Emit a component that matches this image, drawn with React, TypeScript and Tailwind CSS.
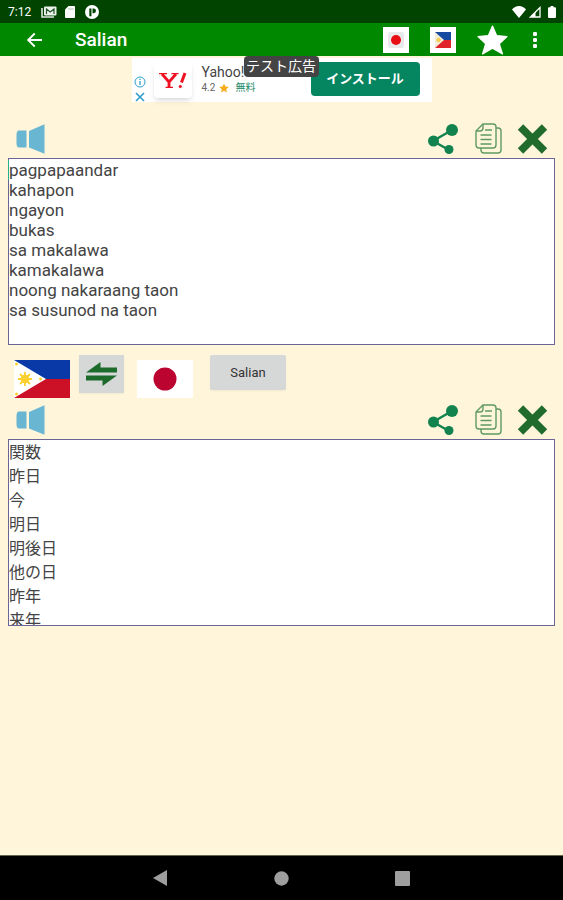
import React, { useState } from 'react'

const sourceWords = [
    'pagpapaandar',
    'kahapon',
    'ngayon',
    'bukas',
    'sa makalawa',
    'kamakalawa',
    'noong nakaraang taon',
    'sa susunod na taon',
].join('\n')

const translatedWords = [
    '関数',
    '昨日',
    '今',
    '明日',
    '明後日',
    '他の日',
    '昨年',
    '来年',
].join('\n')

const StatusBar = () => (
    <div className="flex h-[23px] items-center justify-between bg-[#004400] pl-2 pr-[7px] text-white">
        <div className="flex items-center gap-2">
            <span className="text-xs">7:12</span>
            <svg width="16" height="12" viewBox="0 0 16 12" fill="none" className="ml-0.5">
                <path d="M1 2v9h12" stroke="#dfe8df" strokeWidth="1.6" />
                <rect x="3" y="0.5" width="12.5" height="9" rx="1" fill="#eef3ee" />
                <path d="M5.500 8V3l3.700 3L13 3v5" stroke="#24562a" strokeWidth="1.2" />
            </svg>
            <svg width="10" height="12" viewBox="0 0 10 12">
                <path d="M3.500 0H9a1 1 0 0 1 1 1v10a1 1 0 0 1-1 1H1a1 1 0 0 1-1-1V3.500z" fill="#fff" />
                <path d="M4 2v2M6 2v2M8 2v2" stroke="#9db59d" strokeWidth="0.8" />
            </svg>
            <svg width="14" height="14" viewBox="0 0 13 13" className="ml-0.5">
                <circle cx="6.500" cy="6.500" r="6.500" fill="#fff" />
                <path d="M4 3.200h2v7.300H4zM7 3.200h1a2.200 2.200 0 0 1 0 4.400H7z" fill="#004400" />
            </svg>
        </div>
        <div className="flex items-center gap-[3px]">
            <svg width="14" height="12" viewBox="0 0 14 12">
                <path d="M7 12 0 3.500Q2.800 0 7 0t7 3.500z" fill="#fff" />
            </svg>
            <svg width="12" height="12" viewBox="0 0 12 12">
                <path d="M11 1.500V11H1.500z" fill="none" stroke="#fff" strokeWidth="1.300" />
                <path d="M6.500 6v5H1.500z" fill="#fff" />
            </svg>
            <svg width="8" height="12" viewBox="0 0 8 12" className="ml-1">
                <path d="M2.500 0h3v1.200H7a1 1 0 0 1 1 1V11a1 1 0 0 1-1 1H1a1 1 0 0 1-1-1V2.200a1 1 0 0 1 1-1h1.500z" fill="#fff" />
            </svg>
        </div>
    </div>
)

const AppBar = () => (
    <header className="flex h-[33px] items-center bg-[#008800] pr-[25px] text-white">
        <button aria-label="Back" className="ml-[26px] mr-8">
            <svg width="17" height="16" viewBox="0 0 17 16" fill="none" stroke="#fff" strokeWidth="1.900">
                <path d="M16 8H2M8.700 1.500 2.200 8l6.500 6.500" />
            </svg>
        </button>
        <h1 className="flex-1 pt-0.5 text-[19px] font-medium">Salian</h1>
        <button aria-label="Japanese" className="mr-[21px]">
            <svg width="26" height="26" viewBox="0 0 26 26">
                <rect width="26" height="26" fill="#fff" />
                <rect x="5" y="5" width="16" height="16" rx="2" fill="#e9e9ec" />
                <circle cx="13" cy="13" r="5" fill="#e80d12" />
            </svg>
        </button>
        <button aria-label="Filipino" className="mr-[21px]">
            <svg width="26" height="26" viewBox="0 0 26 26">
                <rect width="26" height="26" fill="#fff" />
                <path d="M5 5h16v8H5z" fill="#174aa0" />
                <path d="M5 13h16v8H5z" fill="#e1222b" />
                <path d="M5 5 14 13l-9 8z" fill="#f3ecd9" />
                <circle cx="8.500" cy="13" r="2.200" fill="#f6cf52" />
            </svg>
        </button>
        <button aria-label="Favorite" className="mr-6">
            <svg width="31" height="30" viewBox="0 0 31 30">
                <path d="M15.500 1 19.600 10.600 30 11.500l-7.700 7.200L25.500 29 15.500 23.200 5.500 29l3.200-10.300L1 11.500l10.400-.9z" fill="#fff" stroke="#fff" strokeWidth="1.200" strokeLinejoin="round" />
            </svg>
        </button>
        <button aria-label="More options">
            <svg width="6" height="18" viewBox="0 0 6 18" fill="#fff">
                <rect x="1" y="1" width="4" height="4" rx="1.200" />
                <rect x="1" y="7" width="4" height="4" rx="1.200" />
                <rect x="1" y="13" width="4" height="4" rx="1.200" />
            </svg>
        </button>
    </header>
)

const AdBanner = () => (
    <div className="relative mx-auto mt-0.5 flex h-11 w-[300px] bg-white">
        <div className="flex flex-col items-center gap-1 pl-0.5 pt-[18px]">
            <svg width="12" height="12" viewBox="0 0 12 12" fill="none" stroke="#2c9fc9">
                <circle cx="6" cy="6" r="5" />
                <path d="M6 5v4M6 2.700v1.200" strokeWidth="1.300" />
            </svg>
            <svg width="10" height="10" viewBox="0 0 10 10" stroke="#2c9fc9" strokeWidth="1.600">
                <path d="m1 1 8 8M9 1 1 9" />
            </svg>
        </div>
        <div className="ml-2 mt-1 flex h-9 w-[38px] items-center justify-center rounded bg-white shadow-md">
            <svg width="28" height="17" viewBox="0 0 28 17" fill="none" stroke="#ee1122">
                <path d="m3 2 7 8M17 2l-7 8v5" strokeWidth="2.800" />
                <path d="M0 1.600h8M12.500 1.600h7M6.500 15.400h7.500" strokeWidth="1.400" />
                <path d="m26 1-3.500 9.500" strokeWidth="3" />
                <circle cx="21.300" cy="14.500" r="1.200" fill="#ee1122" strokeWidth="0.800" />
            </svg>
        </div>
        <div className="ml-2.5 pt-1.5">
            <p className="text-sm leading-4 text-[#444]">Yahoo!</p>
            <p className="flex items-center gap-1 text-[10px] leading-4 text-[#666]">
                4.2
                <svg width="10" height="10" viewBox="0 0 24 24" fill="#f9ab1a">
                    <path d="m12 1 3.300 7.600 8.200.7-6.200 5.500 1.900 8.100L12 18.600l-7.200 4.300 1.900-8.100L.5 9.300l8.200-.7z" />
                </svg>
                <span className="pl-0.5 text-[#258a68]">無料</span>
            </p>
        </div>
        <button className="absolute right-3 top-1 h-[34px] w-[109px] rounded bg-[#058660] text-[13px] font-bold text-white">
            インストール
        </button>
        <span className="absolute -top-0.5 left-28 h-[21px] w-[75px] rounded bg-[#444] text-center text-sm leading-5 text-white">
            テスト広告
        </span>
    </div>
)

const TextTools = ({ onClear }: { onClear: () => void }) => (
    <div className="flex items-end pb-1 pl-4 pr-[15px]">
        <button aria-label="Speak">
            <svg width="30" height="30" viewBox="0 0 30 30" fill="#69b6d2">
                <path d="M3 6.500h7.500v17H3Q.5 23.500.5 19v-8q0-4.500 2.500-4.500z" />
                <path d="M13 7 28.500.300v29.400L13 23.500z" />
            </svg>
        </button>
        <button aria-label="Share" className="ml-auto">
            <svg width="31" height="30" viewBox="0 0 31 30" fill="#12824f">
                <path d="M24 6 5 17l16 9" fill="none" stroke="#12824f" strokeWidth="2.400" />
                <circle cx="24" cy="6" r="6" />
                <circle cx="5.500" cy="17" r="5.500" />
                <circle cx="21" cy="25.500" r="4.500" />
            </svg>
        </button>
        <button aria-label="Copy" className="ml-4">
            <svg width="27" height="31" viewBox="0 0 27 31" fill="none" stroke="#5f9a62" strokeWidth="1.400">
                <path d="M8 1h10q3 0 3 3v18q0 3-3 3H4q-3 0-3-3V8z" />
                <path d="M8 1v4q0 3-3 3H1M21 5h2q3 0 3 3v19q0 3-3 3H9q-3 0-3-3v-2" />
                <path d="M10 7h7M5.500 12h11M5.500 16.500h11M5.500 21h11" />
            </svg>
        </button>
        <button aria-label="Clear" className="ml-[15px]" onClick={onClear}>
            <svg width="31" height="30" viewBox="0 0 31 30">
                <path d="m3.500 3 24 24M27.500 3l-24 24" stroke="#216c2d" strokeWidth="7.600" />
            </svg>
        </button>
    </div>
)

const PhilippineFlag = () => (
    <svg width="56" height="38" viewBox="0 0 56 38">
        <path d="M0 0h56v19H0z" fill="#0839a6" />
        <path d="M0 19h56v19H0z" fill="#cc1127" />
        <path d="M0 0 32 19 0 38z" fill="#fff" />
        <path d="M11 12v14M4 19h14M6 14l10 10M16 14 6 24" stroke="#fcd02f" strokeWidth="1.800" />
        <circle cx="11" cy="19" r="4.300" fill="#fcd02f" />
        <g fill="#fcd02f">
            <circle cx="2.500" cy="4" r="1.500" />
            <circle cx="2.500" cy="34" r="1.500" />
            <circle cx="26.500" cy="19" r="1.500" />
        </g>
    </svg>
)

const JapaneseFlag = () => (
    <svg width="56" height="38" viewBox="0 0 56 38">
        <path d="M0 0h56v38H0z" fill="#fff" />
        <circle cx="28" cy="19" r="11.500" fill="#bc0430" />
    </svg>
)

const NavBar = () => (
    <nav className="flex h-[45px] items-center justify-center gap-[106px] border-t border-[#66634f] bg-black">
        <button aria-label="Back">
            <svg width="15" height="16" viewBox="0 0 15 16" fill="#9e9e9e">
                <path d="M14 0v16L0 8z" />
            </svg>
        </button>
        <button aria-label="Home">
            <svg width="15" height="15" viewBox="0 0 15 15" fill="#9e9e9e">
                <circle cx="7.500" cy="7.500" r="7.200" />
            </svg>
        </button>
        <button aria-label="Recent apps">
            <svg width="15" height="15" viewBox="0 0 15 15" fill="#9e9e9e">
                <rect width="15" height="15" rx="1" />
            </svg>
        </button>
    </nav>
)

const App = () => {
    const [source, setSource] = useState(sourceWords)
    const [result, setResult] = useState(translatedWords)

    return (
        <div className="flex min-h-screen flex-col bg-[#fff5da] font-[Roboto,'Noto_Sans_CJK_JP',sans-serif]">
            <StatusBar />
            <AppBar />
            <main className="flex-1">
                <AdBanner />
                <div className="pt-[21px]">
                    <TextTools onClear={() => setSource('')} />
                    <div className="relative px-2">
                        <textarea
                            aria-label="Filipino text"
                            value={source}
                            onChange={(e) => setSource(e.target.value)}
                            className="block h-[187px] w-full resize-none overflow-hidden border border-[#6b6596] bg-white pt-px text-[17px] leading-5 text-[#444] outline-none"
                        />
                        {/* text cursor */}
                        <span className="absolute left-2 top-0.5 h-5 w-px bg-[#26b08c]" />
                    </div>
                </div>
                <div className="flex items-start pl-3.5 pt-2.5">
                    <div className="pt-[5px]">
                        <PhilippineFlag />
                    </div>
                    <button
                        aria-label="Swap languages"
                        className="ml-[9px] flex h-[38px] w-[45px] items-center justify-center bg-[#d6d7d7] shadow-xs"
                    >
                        <svg width="31" height="24" viewBox="0 0 31 24" fill="#1d6b2b">
                            <path d="M0 10.500 14.500 0v5.500H31v5z" />
                            <path d="M31 13.500 16.500 24v-5.500H0v-5z" />
                        </svg>
                    </button>
                    <div className="ml-[13px] pt-[5px]">
                        <JapaneseFlag />
                    </div>
                    <button className="ml-[17px] h-[35px] w-[76px] rounded-xs bg-[#d6d7d7] text-[13px] text-[#333] shadow-xs">
                        Salian
                    </button>
                </div>
                <div className="pt-1.5">
                    <TextTools onClear={() => setResult('')} />
                    <div className="px-2">
                        <textarea
                            aria-label="Japanese text"
                            value={result}
                            onChange={(e) => setResult(e.target.value)}
                            className="block h-[187px] w-full resize-none overflow-hidden border border-[#6b6596] bg-white pt-px text-base leading-6 text-[#444] outline-none"
                        />
                    </div>
                </div>
            </main>
            <NavBar />
        </div>
    )
}

export default App
